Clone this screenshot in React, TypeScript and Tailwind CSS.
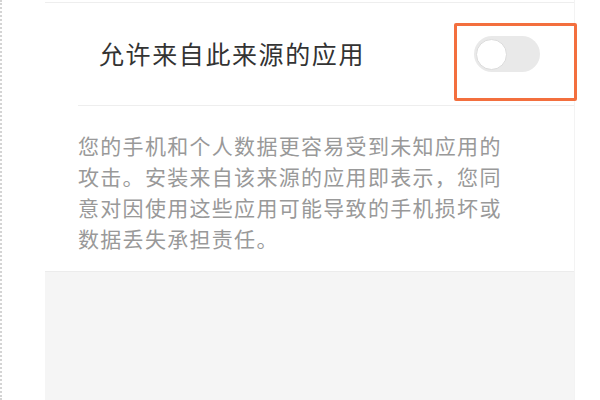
const lines = [
  "您的手机和个人数据更容易受到未知应用的",
  "攻击。安装来自该来源的应用即表示，您同",
  "意对因使用这些应用可能导致的手机损坏或",
  "数据丢失承担责任。",
]

function Toggle() {
  return (
    <div className="w-[66px] h-[36px] rounded-full bg-[#e9e9e9] flex items-center px-[2px]">
      <div className="w-[31px] h-[31px] rounded-full bg-white border border-[#dcdcdc]" />
    </div>
  )
}

export default function App() {
  return (
    <div
      className="relative w-[600px] h-[400px] bg-white overflow-hidden flex"
      style={{ fontFamily: '"Noto Sans CJK SC", "Noto Sans", sans-serif' }}
    >
      <div className="w-[2px] h-full border-l-2 border-dotted border-[#d4d4d4]" />
      <div className="ml-[43px] w-[530px] flex flex-col border-r border-[#f3f3f3]">
        <div className="mt-[2px] border-t border-[#eeeeee]" />
        <div className="h-[102px] flex items-center justify-between pl-[54px] pr-[34px]">
          <span className="text-[25px] tracking-[1.6px] text-[#333333]">允许来自此来源的应用</span>
          <Toggle />
        </div>
        <div className="ml-[33px] border-t border-[#eeeeee]" />
        <div className="pl-[33px] pt-[24px] pb-[17px] text-[21px] leading-[31px] tracking-[1.3px] text-[#999999]">
          {lines.map((l) => (
            <div key={l}>{l}</div>
          ))}
        </div>
        <div className="flex-1 bg-[#f5f5f5] border-t border-[#ececec]" />
      </div>
      <div className="absolute left-[454px] top-[23px] w-[123px] h-[78px] border-[3px] border-[#f36f3e] rounded-[2px]" />
    </div>
  )
}
